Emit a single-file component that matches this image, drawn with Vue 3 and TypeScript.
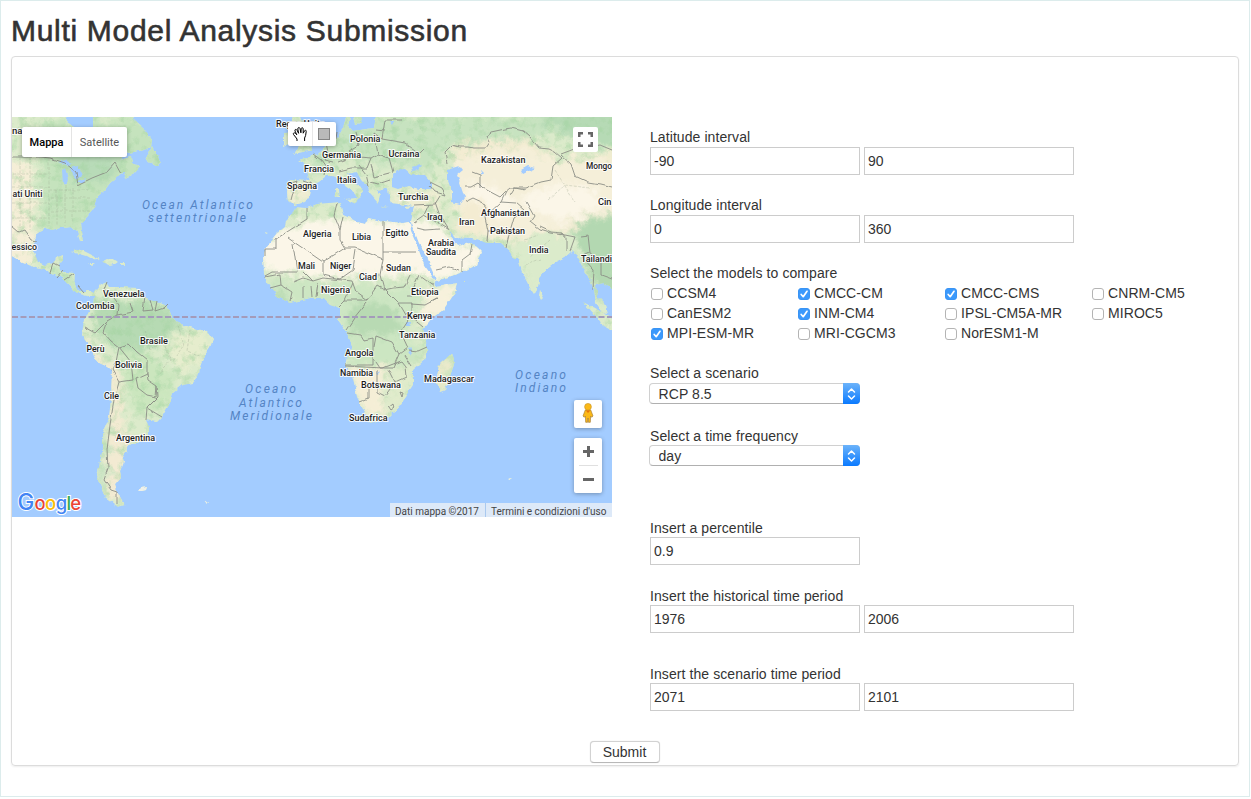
<script setup lang="ts">
import { reactive, ref } from 'vue'

interface Label { t: string; x: number; y: number; w?: number }
interface Model { name: string; on: boolean }

const form = reactive({
  latMin: '-90', latMax: '90', lonMin: '0', lonMax: '360',
  scenario: 'RCP 8.5', frequency: 'day', percentile: '0.9',
  histFrom: '1976', histTo: '2006', scenFrom: '2071', scenTo: '2101',
})

const models = ref<Model[]>([
  { name: 'CCSM4', on: false }, { name: 'CMCC-CM', on: true }, { name: 'CMCC-CMS', on: true }, { name: 'CNRM-CM5', on: false },
  { name: 'CanESM2', on: false }, { name: 'INM-CM4', on: true }, { name: 'IPSL-CM5A-MR', on: false }, { name: 'MIROC5', on: false },
  { name: 'MPI-ESM-MR', on: true }, { name: 'MRI-CGCM3', on: false }, { name: 'NorESM1-M', on: false },
])

const land: string[] = [
  // Americas
  'M0 110H65L67 122L74 127L84 133L93 127L93 110H131L135 121L145 130L152 140L151 147L143 150L128 153L120 160L131 157L132 163L140 167L133 175L123 178L126 171L120 175L110 183L105 190L97 197L95 203L93 210L87 217L81 223L82 232L84 241L80 241L77 232L72 227L60 228L53 230L45 228L37 232L35 240L34 252L38 262L45 265L53 263L55 257L63 254L63 260L58 267L63 272L75 273L74 285L78 291L90 291L94 293L100 285L107 282L110 287L120 287L138 288L145 297L150 300L165 305L170 312L173 318L178 323L190 327L207 332L213 340L210 347L202 360L198 377L193 383L183 385L173 393L170 403L162 417L157 422L146 420L149 427L149 433L145 440L135 444L127 445L128 452L122 455L124 462L120 472L121 478L115 485L117 492L125 505L118 507L105 497L97 478L99 467L103 448L103 432L109 418L111 398L112 370L108 367L97 362L92 352L82 335L83 327L84 318L87 315L93 305L94 297L90 297L77 293L70 285L63 278L47 271L37 268L23 263L12 256L0 245Z',
  // Newfoundland and the Caribbean
  'M145 160L150 151L152 146L156 154L161 162L157 166L150 162Z',
  'M72 252L77 249L84 251L92 255L100 259L92 259.500L86 256Z',
  'M101 262L107 259L113 260L117 263L110 265L105 263Z', 'M89 263l6 0l-3 2z', 'M120 263l5 0l0 2l-5 0z',
  // Europe and Asia
  'M347 110L344 122L341 132L333 143L325 148L318 154L310 157L298 160L306 165L308 175L310 181L289 180L287 192L288 202L295 205L305 202L310 195L312 187L320 181L326 176L333 176L338 178L345 186L355 193L358 199L361 197L363 191L360 187L352 181L348 174L357 172L361 180L368 187L371 195L378 203L380 195L377 190L388 188L389 197L391 203L407 205L414 206L411 222L414 230L419 243L427 256L432 270L437 281L460 273L477 265L482 252L473 243L470 243L457 246L452 240L449 230L455 237L472 238L488 243L500 243L510 252L513 258L518 258L522 272L530 288L534 294L538 287L539 278L547 268L555 262L565 257L573 250L580 262L584 270L590 280L594 290L596 303L602 313L608 314L606 305L598 297L596 285L603 283L612 289L620 280V110H377L374 128L353 131L348 126L350 117V110Z',
  // Scandinavia tip, Great Britain, Ireland
  'M352 110H366L364 122L356 124Z', 'M290 110L300 117L305 128L310 140L312 150L294 154L299 146L296 138L293 126Z', 'M284 132L292 131L291 143L284 146Z',
  // Africa
  'M295 207L307 208L317 204L340 202L343 215L350 218L357 222L365 224L368 218L383 221L403 223L410 222L411 232L418 248L424 265L435 280L436 287L457 283L455 293L443 310L432 318L422 330L427 345L427 358L413 370L413 385L405 397L398 408L388 418L370 423L365 412L357 397L353 378L345 365L348 353L352 348L348 333L345 330L338 320L340 315L339 308L330 305L323 298L310 298L290 303L278 297L267 282L264 273L263 257L266 247L277 233L285 227L286 220L293 213Z',
  'M452 353L455 362L445 390L440 392L436 383L439 365Z', 'M540 290l4 7l-3 3l-2-4z',
  'M583 302L598 310L616 321V333L604 327L595 315Z',
  'M335 189l4 0l1 8l-4 1z', 'M345 199l13-1l-2 6z', 'M381 206l8 1l-1 1z', 'M405 207l6-1l-3 3z',
  'M138 491l3-3l6-1l-1 3l-4 1z', 'M205 500l5 4l-2 0z', 'M507 479l5-1l-3 2z', 'M264 232l3 1l-2 1z', 'M464 281h2v1h-2z',
]

const waters: string[] = [
  'M392 187L392 177L397 170L405 169L411 174L425 175L432 183L432 189L419 189L408 186L398 189Z',
  'M411 167L421 165L418 170L412 171Z',
  'M447 170L460 166L463 170L457 175L460 183L465 198L460 205L452 203L452 192L447 178Z',
  'M521 170L528 166L536 168L529 171L523 174Z',
  'M62 171L65 168L68 178L67 185L63 184Z', 'M58 162L65 160L73 164L67 165Z', 'M70 168L78 166L82 176L77 180L73 175Z',
  'M76 183L86 179L84 183Z', 'M406 322l5 0l-1 5l-4 0z', 'M410 347l2 7l-1 2l-2-6z',
  'M481 170l2 2l-2 3z', 'M364 110L375 110L371 124L360 127Z', 'M389 121l5 0l-2 4z', 'M376 372l3 2l-2 1z',
]

const borders: string[] = [
  'M12 157H41L50 158L65 163L76 172L78 185L92 178L107 172L115 163L121 174',
  'M12 226L19 232L24 230L31 240L37 241', 'M50 273L53 264L59 267M57 277L63 270M65 280L74 274M78 286L84 293',
  'M107 282L104 290L113 297L119 305L118 315L133 312L130 303M145 297L143 311L153 310L150 300M157 301L155 311L164 308L168 304',
  'M84 327L95 333L107 321L118 315M107 321L103 332L111 341L119 347L116 362L112 370L119 382L133 380L131 362L119 347L129 344L137 352L147 360L147 373L136 378L138 388L147 395L156 397L157 386L148 380L147 373M119 382L114 400L110 425L107 450L108 468L104 480L111 490L117 492M117 492V505M158 397L147 408L146 420M147 408L162 417M157 386L158 397L148 407',
  'M307 208V219L290 230L276 239V249H265V255M337 203L334 215L340 230V240L345 248L323 262L288 238M340 230L343 217M383 222V259L356 248L345 248M383 252H416M293 244L297 272H272L265 276M323 262L323 275L340 279L353 270L356 250M383 259L380 275L384 290L377 286L367 300L356 292L352 281L323 278L313 281L304 272M384 290L393 288L404 287L410 275M293 282L303 278L313 281M265 277L280 274L281 285L292 292L290 301M281 285L270 288M303 286V298M311 286L312 297M318 283L316 297M353 283L345 300L338 307M367 300H345M384 288L399 303L406 315M367 302L354 318L346 330M399 303H412V314L404 326L400 333L407 348L399 354L392 342L376 336L374 347M348 333L361 335L364 340L373 338V365H345M406 313L423 327M399 354L393 368L380 368L374 359M345 366L383 368L401 361L405 366L406 377L395 382L389 370M377 370V392L385 396L395 382M369 385V398L359 402M389 407l5-4l1 4l-4 3zM400 392l3 1l-1 4zM404 355l7 11M409 350L418 351L427 347M412 290L419 275L434 286M411 304L425 305L438 298L430 302M411 296H407',
  'M288 184L296 181L291 200M304 181L313 184M313 154L321 160L326 167L324 176M326 142L328 153L324 160L333 162M337 132L335 145M356 132L359 145L349 151L359 157L371 158L378 154L374 133M374 133L382 139L405 143L420 154L424 150M371 158L367 168L351 168L339 171M351 153L346 159L338 162M378 154L389 158L393 172L374 177L371 164M359 165L366 174L369 187M371 182L378 184L390 180M382 139L385 120L402 120M385 131L376 130',
  'M430 182L442 188L446 195L435 192L430 186M414 205L435 204L440 196M429 204L424 215L414 222M424 215L448 229M417 228L425 230L440 229M435 202L440 216L449 230M436 270L450 267L459 270M462 261V272M462 261L470 255L472 244',
  'M447 163L445 152L452 145L460 147L467 147L475 148L485 148L489 142L486 136L491 132L505 129L511 128L523 131L530 137L539 148L549 149L555 152L562 158L553 166L551 180L541 182L536 184L525 188H510L504 193L500 197L483 188L478 183L471 187H465',
  'M472 172L480 175V188M465 202L473 198L486 204L485 217L488 231L487 242M485 217L501 202L516 203L524 210L514 217L510 231L488 231M510 231L506 247M526 202L534 216L530 222L540 230L550 233L565 235L575 237L570 251M540 227L551 232L562 233L566 238V251M580 236L588 235L590 253L582 257L594 270L593 289M590 253L601 260V275L612 279',
  'M561 155L571 164L575 176L588 182L600 184L612 187M510 196L515 188L525 190M501 202L507 190M561 154L577 148L590 147L600 145L612 150',
]

const countries: Label[] = [
  { t: 'na', x: 12, y: 134 }, { t: 'ati Uniti', x: 12.5, y: 197, w: 30 }, { t: 'essico', x: 11.5, y: 250, w: 25.5 },
  { t: 'Venezuela', x: 103, y: 297, w: 41.5 }, { t: 'Colombia', x: 76, y: 309, w: 38.5 }, { t: 'Perù', x: 86.5, y: 352, w: 18 },
  { t: 'Brasile', x: 140, y: 344, w: 28 }, { t: 'Bolivia', x: 115, y: 368, w: 27 }, { t: 'Cile', x: 104, y: 399, w: 15 },
  { t: 'Argentina', x: 116, y: 441, w: 39 }, { t: 'Regno Unito', x: 276, y: 127, w: 49 }, { t: 'Polonia', x: 350, y: 142, w: 30.5 },
  { t: 'Germania', x: 322, y: 158, w: 39 }, { t: 'Ucraina', x: 388.5, y: 157, w: 31 }, { t: 'Francia', x: 304, y: 172, w: 30 },
  { t: 'Italia', x: 337, y: 183, w: 19.5 }, { t: 'Spagna', x: 287, y: 189, w: 30 }, { t: 'Turchia', x: 398, y: 200, w: 30.5 },
  { t: 'Algeria', x: 303, y: 237, w: 28.5 }, { t: 'Libia', x: 352, y: 240, w: 19 }, { t: 'Egitto', x: 385.5, y: 236, w: 23 },
  { t: 'Mali', x: 298, y: 269, w: 17 }, { t: 'Niger', x: 330, y: 269, w: 21.5 }, { t: 'Sudan', x: 386, y: 271, w: 25 },
  { t: 'Ciad', x: 359, y: 280, w: 18 }, { t: 'Nigeria', x: 321, y: 293, w: 29 }, { t: 'Etiopia', x: 411, y: 295, w: 27.5 },
  { t: 'Kenya', x: 407, y: 319, w: 25 }, { t: 'Tanzania', x: 399, y: 338, w: 36.5 }, { t: 'Angola', x: 345, y: 356, w: 28.5 },
  { t: 'Namibia', x: 340, y: 376, w: 33 }, { t: 'Botswana', x: 361, y: 388, w: 40 }, { t: 'Sudafrica', x: 349, y: 421, w: 38.5 },
  { t: 'Madagascar', x: 424, y: 382, w: 50 }, { t: 'Kazakistan', x: 481, y: 163, w: 44.5 }, { t: 'Mongo', x: 586, y: 169, w: 26 },
  { t: 'Cin', x: 598, y: 205, w: 13.5 }, { t: 'Iraq', x: 427, y: 220, w: 15.5 }, { t: 'Iran', x: 459, y: 225, w: 15.5 },
  { t: 'Afghanistan', x: 481, y: 216, w: 48.5 }, { t: 'Pakistan', x: 490, y: 234, w: 35 }, { t: 'Arabia', x: 428, y: 246, w: 26 },
  { t: 'Saudita', x: 426, y: 255, w: 30 }, { t: 'India', x: 529, y: 253, w: 19.5 }, { t: 'Tailandi', x: 581, y: 262, w: 31 },
]

const oceans: Label[] = [
  { t: 'Ocean Atlantico', x: 142, y: 209, w: 111 }, { t: 'settentrionale', x: 148, y: 222, w: 98 },
  { t: 'Oceano', x: 245, y: 393, w: 51 }, { t: 'Atlantico', x: 239, y: 407, w: 63 }, { t: 'Meridionale', x: 230, y: 420, w: 82 },
  { t: 'Oceano', x: 515, y: 379, w: 51 }, { t: 'Indiano', x: 515, y: 392, w: 51 },
]
</script>

<template>
  <div class="page">
    <h1>Multi Model Analysis Submission</h1>
    <div class="panel">
      <div class="columns">
        <div class="map">
          <svg class="canvas" viewBox="12 117 600 400" width="600" height="400">
            <defs>
              <clipPath id="landclip"><path v-for="(d, i) in land" :key="i" :d="d" /></clipPath>
              <filter id="rough" x="0" y="110" width="620" height="410" filterUnits="userSpaceOnUse" color-interpolation-filters="sRGB">
                <feTurbulence type="fractalNoise" baseFrequency="0.17" numOctaves="3" seed="4" />
                <feDisplacementMap in="SourceGraphic" scale="4" xChannelSelector="R" yChannelSelector="G" />
              </filter>
              <filter id="line" x="0" y="110" width="620" height="410" filterUnits="userSpaceOnUse" color-interpolation-filters="sRGB">
                <feTurbulence type="fractalNoise" baseFrequency="0.1" numOctaves="1" seed="4" result="n" />
                <feDisplacementMap in="SourceGraphic" in2="n" scale="4" xChannelSelector="R" yChannelSelector="G" />
              </filter>
              <filter id="patch" x="0" y="100" width="630" height="430" filterUnits="userSpaceOnUse" color-interpolation-filters="sRGB">
                <feGaussianBlur stdDeviation="3" result="b" />
                <feTurbulence type="fractalNoise" baseFrequency="0.09" numOctaves="4" seed="9" result="n" />
                <feDisplacementMap in="b" in2="n" scale="20" xChannelSelector="R" yChannelSelector="G" />
              </filter>
              <filter id="mottle" x="0" y="110" width="620" height="410" filterUnits="userSpaceOnUse" color-interpolation-filters="sRGB">
                <feTurbulence type="fractalNoise" baseFrequency="0.11" numOctaves="4" seed="12" />
                <feColorMatrix values="0 0 0 0 .64  0 0 0 0 .83  0 0 0 0 .63  3 0 0 0 -1.45" />
              </filter>
            </defs>
            <rect x="12" y="117" width="600" height="400" fill="#a3ccff" />
            <g filter="url(#rough)">
              <g clip-path="url(#landclip)">
                <rect x="0" y="110" width="625" height="410" fill="#dcebcb" />
                <g filter="url(#patch)">
                  <path d="M38 120H165V185L110 190L80 235L40 230L42 180Z" fill="#c5e3bd" />
                  <path d="M55 150L120 155L110 180L80 185L60 160Z" fill="#b8dbb8" />
                  <path d="M0 160H30L34 230L30 265H0Z" fill="#f5eed7" />
                  <path d="M45 260L75 275L90 294H60Z" fill="#c9e6c0" />
                  <path d="M92 300L165 303L180 325L165 345L140 352L115 350L95 330Z" fill="#b6dab3" />
                  <path d="M180 330L213 333L205 365L180 370L165 350Z" fill="#e6edcd" />
                  <path d="M120 350L145 350L175 375L165 410L140 415L127 390Z" fill="#cbe6be" />
                  <path d="M78 333L98 357L120 365L122 400L126 450L122 500L107 500L109 420L111 372L92 365Z" fill="#f3ead2" />
                  <path d="M98 435L108 425L105 500L95 490Z" fill="#cbe4c4" />
                  <path d="M300 115H570L540 140L450 145L430 170L345 160L315 175Z" fill="#c7e3c0" />
                  <path d="M530 110H620V148L570 140Z" fill="#b6dab5" />
                  <path d="M287 184H312L308 202H287ZM395 191L440 190L440 210H395Z" fill="#f0edd3" />
                  <path d="M450 148L490 138L530 140L560 160L620 150V220L560 235L510 240L470 235L455 205L465 180Z" fill="#f3ecd2" />
                </g>
                <rect class="mottled" x="0" y="110" width="620" height="410" filter="url(#mottle)" />
                <g filter="url(#patch)">
                  <path d="M450 165L490 150L530 150L560 160L600 158L620 170V212L560 230L510 240L470 235L455 205Z" fill="#f5efd9" />
                  <path d="M258 245L295 224L345 218L415 220L440 228L455 240L485 250L475 268L440 280L415 272L385 278H330L263 272Z" fill="#fbf6e8" />
                  <path d="M467 180L500 192L520 203L500 220L470 210ZM520 200L550 185L600 188V208L570 220L540 218Z" fill="#fbf6e8" />
                  <path d="M466 198L485 205V238L455 230Z" fill="#f4ecd2" />
                  <path d="M435 286L460 282L450 305L425 330L415 310Z" fill="#f7f1dc" />
                  <path d="M345 368H390L380 395L388 412L370 420Z" fill="#f5eed6" />
                </g>
                <g filter="url(#patch)">
                  <path d="M264 279L330 282L390 285L415 290L425 295L416 310L405 340H345L335 305H280Z" fill="#cde6c3" />
                  <path d="M352 302L396 304L400 335L350 333ZM272 290L288 295L285 308L272 298Z" fill="#b8daB3" />
                  <path d="M350 340H400L425 345L420 360L395 365H350Z" fill="#cce6c2" />
                  <path d="M395 370H412L400 410L385 415Z" fill="#e0ebcb" />
                  <path d="M520 237L545 234L575 240L580 255L535 292L520 265Z" fill="#dbebcb" />
                  <path d="M575 222L620 212V300H600L580 255Z" fill="#b3d8b1" />
                  <path d="M452 350L458 353L448 390Z" fill="#b8dcb0" />
                  <path d="M434 365L449 360L443 395L434 388Z" fill="#ece9ca" />
                </g>
              </g>
              <path v-for="(d, i) in waters" :key="'w' + i" :d="d" fill="#a3ccff" />
              <path d="M138 491l3-3l6-1l-1 3l-4 1zM205 500l5 4l-2 0zM507 479l5-1l-3 2z" fill="#eef0ea" />
            </g>
            <g filter="url(#line)">
              <g fill="none" stroke="#8b8d86" stroke-width=".9" stroke-linejoin="round">
                <path v-for="(d, i) in borders" :key="'b' + i" :d="d" />
              </g>
              <path d="M20 157V228M30 157V230M12 174H48M12 187H50M12 203H49M12 218H48M50 190H88M51 198H90M51 211H91M49 158V226M57 190V226M65 185V226M73 187V223M145 330L150 350L163 342L171 360L160 373M178 325L184 345L173 360M190 330L187 351L200 356M548 200L565 185L590 188M550 240L530 257M526 265L541 260M525 240L538 235M555 170L575 202" fill="none" stroke="#9faa94" stroke-width=".6" stroke-dasharray="3 1.5" opacity=".6" />
            </g>
            <path d="M12 317H612" stroke="#a49bba" stroke-width="1.8" stroke-dasharray="6 2.5" />
            <g class="ocean">
              <text v-for="(l, i) in oceans" :key="i" :x="l.x" :y="l.y" :textLength="l.w">{{ l.t }}</text>
            </g>
            <g class="country">
              <text v-for="(l, i) in countries" :key="i" :x="l.x" :y="l.y" :textLength="l.w" lengthAdjust="spacingAndGlyphs">{{ l.t }}</text>
            </g>
            <g class="logo">
              <text x="17.500" y="510" fill="#4285f4">G</text>
              <text x="34.500" y="510" fill="#ea4335">o</text>
              <text x="45" y="510" fill="#fbbc05">o</text>
              <text x="55.800" y="510" fill="#4285f4">g</text>
              <text x="66.600" y="510" fill="#34a853">l</text>
              <text x="70.300" y="510" fill="#ea4335">e</text>
            </g>
          </svg>

          <div class="types"><span class="active">Mappa</span><span>Satellite</span></div>
          <div class="tools">
            <span class="tool">
              <svg width="16" height="16" viewBox="0 0 16 16"><path d="M5 15V13L3.500 11L1.500 8.500C.8 7 2.300 6.300 3.300 7.200L4.800 8.800L3 5C2.500 3.300 4.200 2.700 5 4.200L6.600 7.300L5.800 3C5.800 1.200 7.500 1 8 2.500L8.900 6.800L9.200 2.600C9.600 1.200 11.200 1.500 11.200 3L11.200 7.200L12.500 4.800C13.200 3.700 14.500 4.300 14.200 5.600L13.600 9.500L12.600 12V15" fill="#fff" stroke="#000" stroke-width="1" stroke-linejoin="round" /></svg>
            </span>
            <span class="tool"><i class="square"></i></span>
          </div>
          <div class="full">
            <svg width="15" height="15" viewBox="0 0 15 15"><path d="M1.250 5V1.250H5M10 1.250H13.750V5M13.750 10V13.750H10M5 13.750H1.250V10" fill="none" stroke="#666" stroke-width="2.500" /></svg>
          </div>
          <div class="pegman">
            <svg width="14" height="20" viewBox="0 0 14 20"><path d="M4.300 7H9.700L12 13L10.700 14.300L9.600 13L9.300 19.300H7.400L7 15L6.600 19.300H4.700L4.400 13L3.300 14.300L2 13Z" fill="#fbb917" stroke="#a98037" stroke-width=".7" /><circle cx="7" cy="3.800" r="3.400" fill="#fbb917" stroke="#c69125" stroke-width=".6" /><path d="M4.800 7.400H9.300L7 10Z" fill="#e8710a" /></svg>
          </div>
          <div class="zoomer">
            <span class="plus"></span><hr /><span class="minus"></span>
          </div>
          <div class="credits"><span>Dati mappa ©2017</span><span>Termini e condizioni d'uso</span></div>
        </div>

        <form class="fields" @submit.prevent>
          <div class="row"><label>Latitude interval</label><div class="pair"><input v-model="form.latMin" type="text" /><input v-model="form.latMax" type="text" /></div></div>
          <div class="row"><label>Longitude interval</label><div class="pair"><input v-model="form.lonMin" type="text" /><input v-model="form.lonMax" type="text" /></div></div>
          <div class="row">
            <label>Select the models to compare</label>
            <div class="models">
              <label v-for="m in models" :key="m.name" class="model">
                <input v-model="m.on" type="checkbox" />
                <span class="box"><svg v-if="m.on" width="12" height="12" viewBox="0 0 12 12"><path d="M3.200 6.500L5.200 8.700L9 3.300" fill="none" stroke="#fff" stroke-width="1.700" stroke-linecap="round" stroke-linejoin="round" /></svg></span>{{ m.name }}
              </label>
            </div>
          </div>
          <div class="row scenario">
            <label>Select a scenario</label>
            <div class="select"><select v-model="form.scenario"><option>RCP 8.5</option></select><i><svg width="9" height="14" viewBox="0 0 9 14"><path d="M1.500 5L4.500 2L7.500 5M1.500 9L4.500 12L7.500 9" fill="none" stroke="#fff" stroke-width="1.500" stroke-linecap="round" stroke-linejoin="round" /></svg></i></div>
          </div>
          <div class="row frequency">
            <label>Select a time frequency</label>
            <div class="select"><select v-model="form.frequency"><option>day</option></select><i><svg width="9" height="14" viewBox="0 0 9 14"><path d="M1.500 5L4.500 2L7.500 5M1.500 9L4.500 12L7.500 9" fill="none" stroke="#fff" stroke-width="1.500" stroke-linecap="round" stroke-linejoin="round" /></svg></i></div>
          </div>
          <div class="row tight"><label>Insert a percentile</label><div class="pair"><input v-model="form.percentile" type="text" /></div></div>
          <div class="row tight history"><label>Insert the historical time period</label><div class="pair"><input v-model="form.histFrom" type="text" /><input v-model="form.histTo" type="text" /></div></div>
          <div class="row tight"><label>Insert the scenario time period</label><div class="pair"><input v-model="form.scenFrom" type="text" /><input v-model="form.scenTo" type="text" /></div></div>
        </form>
      </div>
      <button class="submit" type="button">Submit</button>
    </div>
  </div>
</template>

<style>
body { margin: 0; background: #fff; overflow: hidden; }
</style>

<style scoped>
* { box-sizing: border-box; }
.page { width: 1250px; height: 797px; border: 1px solid #dcecec; padding: 0 10px; background: #fff; color: #333; font: 14px/20px "Liberation Sans", Arial, sans-serif; }
h1 { margin: 0; height: 55px; padding-top: 10px; font-size: 30px; line-height: 40px; font-weight: 400; letter-spacing: .7px; -webkit-text-stroke: .6px #333; white-space: nowrap; }
.panel { height: 710px; width: 1228px; border: 1px solid #dcdcdc; border-radius: 4px; box-shadow: 0 1px 2px rgba(0,0,0,.07); padding-top: 60px; display: flex; flex-direction: column; align-items: center; }
.columns { display: flex; width: 100%; height: 624px; align-items: flex-start; }
.map { position: relative; width: 600px; height: 400px; overflow: hidden; flex: none; font-family: Roboto, sans-serif; }
.canvas { display: block; }
.mottled { opacity: .55; }
.country text { font: 500 9.600px Roboto, sans-serif; fill: #1d1d1d; stroke: rgba(255,255,255,.85); stroke-width: 2.200px; paint-order: stroke; stroke-linejoin: round; }
.ocean text { font: italic 400 12px Roboto, sans-serif; fill: #5484c4; }
.logo text { font-family: Inter, sans-serif; font-weight: 500; font-size: 18.500px; stroke: #fff; stroke-width: 2px; paint-order: stroke; }
.logo text:first-child { font-size: 22.500px; }
.types { position: absolute; left: 10px; top: 10px; height: 30px; display: flex; background: #fff; border-radius: 2px; box-shadow: 0 1px 4px rgba(0,0,0,.3); font-size: 11px; line-height: 31px; color: #565656; }
.types span { width: 55px; text-align: center; }
.types .active { width: 50px; color: #000; font-weight: 500; border-right: 1px solid #e4e4e4; }
.tools { position: absolute; left: 276px; top: 5px; display: flex; background: #fff; border-radius: 2px; box-shadow: 0 1px 4px rgba(0,0,0,.3); }
.tool { width: 24px; height: 24px; display: flex; align-items: center; justify-content: center; }
.tool + .tool { box-shadow: inset 1px 0 #e8e8e8; }
.square { width: 12px; height: 12px; background: #bababa; border: 1px solid #858585; }
.full { position: absolute; left: 561px; top: 10px; width: 25px; height: 25px; background: #fff; border-radius: 2px; display: flex; align-items: center; justify-content: center; }
.pegman { position: absolute; left: 562px; top: 283px; width: 28px; height: 28px; background: #fff; border-radius: 2px; box-shadow: 0 1px 4px rgba(0,0,0,.3); display: flex; align-items: center; justify-content: center; padding-bottom: 2px; }
.zoomer { position: absolute; left: 562px; top: 321px; width: 28px; height: 55px; background: #fff; border-radius: 2px; box-shadow: 0 1px 4px rgba(0,0,0,.3); display: grid; grid-template-rows: 27px 1px 27px; place-items: center; }
.zoomer hr { margin: 0; border: 0; width: 19px; height: 1px; background: #e0e0e0; }
.plus { width: 11px; height: 11px; background: linear-gradient(#666,#666) center / 11px 3px no-repeat, linear-gradient(#666,#666) center / 3px 11px no-repeat; }
.minus { width: 11px; height: 3px; background: #666; }
.credits { position: absolute; right: 0; bottom: 0; height: 14px; display: flex; font-size: 10px; color: #444; background: rgba(245,245,245,.7); white-space: nowrap; overflow: hidden; }
.credits span { width: 95px; padding-left: 5px; line-height: 17px; }
.credits span + span { width: 127px; border-left: 1px solid #a9c9ef; }
.fields { margin: 10px 0 0 38px; width: 588px; letter-spacing: .08px; }
.row { display: flex; flex-direction: column; margin-bottom: 20px; }
.row > label { height: 20px; line-height: 21px; }
.tight > label { height: 19px; line-height: 20px; }
.pair { display: flex; gap: 4px; }
.pair input { width: 210px; height: 28px; margin: 0; border: 1px solid #ccc; padding: 0 3px 1px; font: inherit; color: #333; background: #fff; outline: 0; border-radius: 0; }
.models { display: grid; grid-template-columns: repeat(4, 147px); grid-auto-rows: 20px; }
.model { display: flex; align-items: center; height: 20px; line-height: 20px; white-space: nowrap; }
.model input { display: none; }
.box { width: 12px; height: 12px; margin: 1px 4px 0 1px; border: 1px solid #b4b4b4; border-radius: 3px; background: #fff; flex: none; display: flex; align-items: center; justify-content: center; }
.box svg { flex: none; }
.model input:checked + .box { background: #3b99fc; border-color: #3a94f4; }
.select { position: relative; width: 211px; height: 21px; margin-left: -1px; border: 1px solid #d0d0d0; border-bottom-color: #b0b0b0; border-radius: 4px; background: #fff; }
.select select { appearance: none; border: 0; background: transparent; margin: 0; padding: 0 8.500px; width: 100%; height: 20px; font: inherit; letter-spacing: .08px; color: #333; line-height: 20px; outline: 0; }
.select i { position: absolute; right: -1px; top: -1px; width: 17px; height: 21px; border-radius: 0 4px 4px 0; background: linear-gradient(#6cb3fa, #0a7aff); display: flex; align-items: center; justify-content: center; }
.scenario { margin-bottom: 22px; }
.frequency { margin-bottom: 52px; }
.frequency > label { height: 19px; line-height: 20px; }
.tight { margin-bottom: 21px; }
.history { margin-bottom: 31px; }
.submit { width: 70px; height: 22px; flex: none; border: 1px solid #d2d2d2; border-bottom-color: #b8b8b8; border-radius: 4px; background: #fff; color: #333; font: inherit; line-height: 20px; padding: 0 1px 0 0; box-shadow: 0 0 1px rgba(0,0,0,.2); }
</style>
